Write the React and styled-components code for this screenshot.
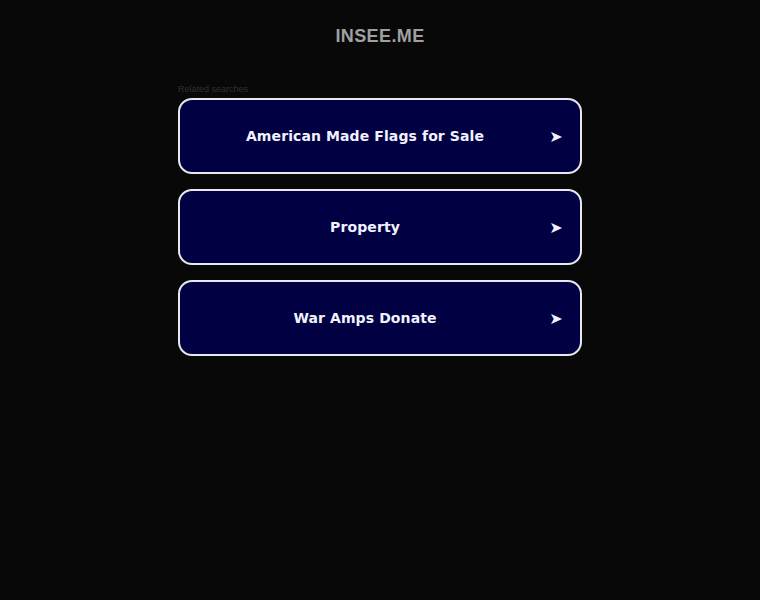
import React from "react";
import styled, {createGlobalStyle} from "styled-components";

const Global = createGlobalStyle`
  html, body {
    margin: 0;
    padding: 0;
    background: #080808;
  }
  body {
    min-height: 600px;
  }
`;

const Page = styled.div`
  width: 760px;
  min-height: 600px;
  display: flex;
  flex-direction: column;
  align-items: center;
`;

const Domain = styled.h1`
  margin: 26px 0 0;
  font-family: "Liberation Sans", Arial, sans-serif;
  font-size: 18px;
  line-height: 21px;
  font-weight: bold;
  letter-spacing: 0.4px;
  color: #a0a0a0;
`;

const Results = styled.div`
  width: 404px;
  margin-top: 37px;
  display: flex;
  flex-direction: column;
`;

const Label = styled.div`
  font-family: "Liberation Sans", Arial, sans-serif;
  font-size: 9px;
  line-height: 11px;
  color: #303030;
  margin-bottom: 3px;
`;

const List = styled.div`
  display: flex;
  flex-direction: column;
  gap: 15px;
`;

const Link = styled.a`
  box-sizing: border-box;
  height: 76px;
  display: flex;
  align-items: center;
  background: #000042;
  border: 2px solid #e8e8f0;
  border-radius: 14px;
  text-decoration: none;
  color: #f2f2ff;
  font-family: "DejaVu Sans", Verdana, sans-serif;
  font-weight: bold;
  font-size: 14px;
`;

const Text = styled.span`
  flex: 1;
  padding-left: 2px;
  text-align: center;
  letter-spacing: 0.1px;
`;

const Arrow = styled.span`
  width: 16px;
  margin-right: 16px;
  font-size: 16px;
  text-align: center;
`;

const searches = ["American Made Flags for Sale", "Property", "War Amps Donate"];

export default function App() {
  return (
    <>
      <Global/>
      <Page>
        <Domain>INSEE.ME</Domain>
        <Results>
          <Label>Related searches</Label>
          <List>
            {searches.map(s => (
              <Link key={s} href="#">
                <Text>{s}</Text>
                <Arrow>➤</Arrow>
              </Link>
            ))}
          </List>
        </Results>
      </Page>
    </>
  );
}
